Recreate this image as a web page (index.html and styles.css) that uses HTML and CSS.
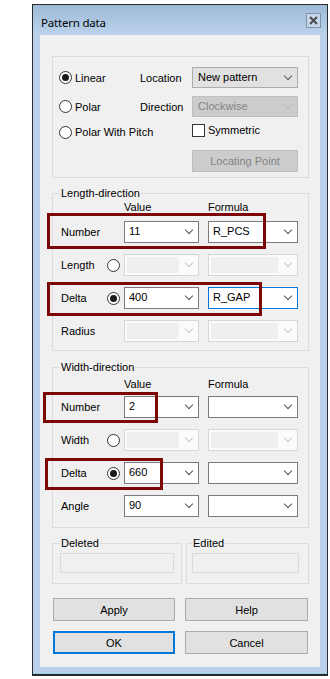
FILE: index.html
```html
<!DOCTYPE html>
<html lang="en">
<head>
    <meta charset="UTF-8">
    <meta name="viewport" content="width=device-width, initial-scale=1.0">
    <title>Pattern data</title>
    <link rel="stylesheet" href="styles.css">
</head>
<body>
    <div class="window">
        <div class="titlebar">
            <span class="title">Pattern data</span>
            <span class="close">
                <svg width="9" height="9" viewBox="0 0 9 9"><path d="M1 1 L8 8 M8 1 L1 8" stroke="#4d4d4d" stroke-width="2"/></svg>
            </span>
        </div>
        <div class="client">
            <div class="group top-group">
                <div class="opt"><span class="radio checked"></span>Linear</div>
                <div class="lbl">Location</div>
                <div class="combo btn-combo">New pattern</div>

                <div class="opt"><span class="radio"></span>Polar</div>
                <div class="lbl">Direction</div>
                <div class="combo btn-combo off">Clockwise</div>

                <div class="opt short"><span class="radio"></span>Polar With Pitch</div>
                <div></div>
                <div class="check"><span class="box"></span>Symmetric</div>

                <div></div>
                <div></div>
                <div class="button off">Locating Point</div>
            </div>

            <fieldset class="fs length">
                <legend>Length-direction</legend>
                <div class="grid">
                    <div></div><div></div>
                    <div class="head">Value</div>
                    <div class="head formula">Formula</div>

                    <div class="lbl">Number</div><div></div>
                    <div class="combo">11</div>
                    <div class="combo formula">R_PCS</div>

                    <div class="lbl">Length</div>
                    <div class="rcell"><span class="radio"></span></div>
                    <div class="combo dim"></div>
                    <div class="combo dim formula"></div>

                    <div class="lbl">Delta</div>
                    <div class="rcell"><span class="radio checked"></span></div>
                    <div class="combo">400</div>
                    <div class="combo formula focus">R_GAP</div>

                    <div class="lbl">Radius</div><div></div>
                    <div class="combo dim"></div>
                    <div class="combo dim formula"></div>
                </div>
            </fieldset>

            <fieldset class="fs width">
                <legend>Width-direction</legend>
                <div class="grid">
                    <div></div><div></div>
                    <div class="head">Value</div>
                    <div class="head formula">Formula</div>

                    <div class="lbl">Number</div><div></div>
                    <div class="combo">2</div>
                    <div class="combo formula"></div>

                    <div class="lbl">Width</div>
                    <div class="rcell"><span class="radio"></span></div>
                    <div class="combo dim"></div>
                    <div class="combo dim formula"></div>

                    <div class="lbl">Delta</div>
                    <div class="rcell"><span class="radio checked"></span></div>
                    <div class="combo">660</div>
                    <div class="combo formula"></div>

                    <div class="lbl">Angle</div><div></div>
                    <div class="combo">90</div>
                    <div class="combo formula"></div>
                </div>
            </fieldset>

            <div class="pair">
                <fieldset class="fs small deleted">
                    <legend>Deleted</legend>
                    <div class="textbox"></div>
                </fieldset>
                <fieldset class="fs small edited">
                    <legend>Edited</legend>
                    <div class="textbox"></div>
                </fieldset>
            </div>

            <div class="buttons">
                <div class="button">Apply</div>
                <div class="button">Help</div>
                <div class="button default">OK</div>
                <div class="button">Cancel</div>
            </div>

            <!-- highlight marks drawn over the dialog -->
            <div class="mark mark-1"></div>
            <div class="mark mark-2"></div>
            <div class="mark mark-3"></div>
            <div class="mark mark-4"></div>
        </div>
    </div>
</body>
</html>
```

FILE: styles.css
```css
body {
    margin: 0;
    background: #fff;
    font-family: "Liberation Sans", Arial, sans-serif;
    font-size: 11px;
    color: #000;
}
.window {
    margin: 4px 0 0 32px;
    width: 296px;
    box-sizing: border-box;
    border: 1px solid #2b2b2b;
    border-bottom: 2px solid #2b2b2b;
    background: #b9d1ea;
    padding: 0 7px 7px;
    box-shadow: inset 0 -1px 0 #8fd3f0;
}
.titlebar {
    height: 30px;
    margin: 0 -7px;
    padding: 0 6px 0 8px;
    background: linear-gradient(#9dbad8, #bbd2ea);
    display: flex;
    align-items: center;
    justify-content: space-between;
}
.title {
    font-family: "Noto Sans", sans-serif;
    font-size: 11.5px;
    letter-spacing: -0.2px;
    line-height: 14px;
    margin-top: 6px;
}
.close {
    width: 13px;
    height: 13px;
    border: 1px solid #8394a8;
    background: #c5d7ea;
    display: flex;
    align-items: center;
    justify-content: center;
}
.client {
    position: relative;
    height: 632px;
    box-sizing: border-box;
    background: #f0f0f0;
    padding: 21px 11px 0 12px;
}

/* group boxes */
.group {
    border: 1px solid #dcdcdc;
}
.top-group {
    display: grid;
    grid-template-columns: 81px 52px 106px;
    grid-template-rows: 29px 29px 25px 22px;
    padding: 10px 0 5px 6px;
    align-items: start;
}
.fs {
    margin: 0;
    border: 1px solid #dcdcdc;
    min-width: 0;
}
.fs legend {
    padding: 0 1px;
    line-height: 13px;
}
.length {
    margin-top: 9px;
    padding: 1px 10px 8px 7px;
}
.width {
    margin-top: 10px;
    padding: 4px 10px 10px 7px;
}
.grid {
    display: grid;
    grid-template-columns: 47px 17px 75px 99px;
    align-items: start;
}
.length .grid { grid-template-rows: 20px 33px 33px 33px 22px; }
.width .grid { grid-template-rows: 18px 33px 33px 33px 22px; }
.head {
    line-height: 13px;
}
.formula {
    margin-left: 9px;
}

.lbl {
    height: 22px;
    display: flex;
    align-items: center;
    padding-left: 1px;
}
.top-group .lbl { height: 21px; padding-left: 0; }
.opt {
    height: 21px;
    display: flex;
    align-items: center;
    gap: 3px;
    white-space: nowrap;
}
.opt.short { height: 14px; }
.rcell {
    height: 22px;
    display: flex;
    align-items: center;
}

/* radio and check */
.radio {
    width: 11px;
    height: 11px;
    border: 1px solid #333;
    border-radius: 50%;
    background: #fff;
    display: flex;
    align-items: center;
    justify-content: center;
    flex: none;
}
.radio.checked::after {
    content: "";
    width: 7px;
    height: 7px;
    border-radius: 50%;
    background: #1b1b1b;
}
.check {
    height: 14px;
    margin-top: -2px;
    display: flex;
    align-items: center;
    gap: 3px;
}
.box {
    width: 11px;
    height: 11px;
    border: 1px solid #333;
    background: #fff;
}

/* combos */
.combo {
    position: relative;
    height: 22px;
    box-sizing: border-box;
    border: 1px solid #7a7a7a;
    background: #fff;
    padding-left: 4px;
    line-height: 19px;
}
.combo::after {
    content: "";
    position: absolute;
    right: 6px;
    top: 5px;
    width: 5px;
    height: 5px;
    border-right: 1px solid #555;
    border-bottom: 1px solid #555;
    transform: rotate(45deg);
}
.combo.focus {
    border-color: #0078d7;
}
.combo.dim {
    border-color: #d6d6d6;
    background: #fbfbfb;
}
.combo.dim::before {
    content: "";
    position: absolute;
    left: 2px;
    top: 2px;
    bottom: 2px;
    right: 19px;
    background: #efefef;
}
.combo.dim::after {
    border-color: #c8c8c8;
}
.btn-combo {
    height: 21px;
    background: #e1e1e1;
    border-color: #adadad;
    padding-left: 5px;
    line-height: 19px;
}
.btn-combo.off {
    background: #cccccc;
    border-color: #bfbfbf;
    color: #838383;
}
.btn-combo.off::after {
    border-color: #bfbfbf;
}

/* buttons */
.button {
    height: 23px;
    box-sizing: border-box;
    border: 1px solid #adadad;
    background: #e1e1e1;
    display: flex;
    align-items: center;
    justify-content: center;
}
.button.off {
    height: 22px;
    background: #cccccc;
    border-color: #bfbfbf;
    color: #838383;
}
.button.default {
    border: 2px solid #0078d7;
}

/* deleted / edited */
.pair {
    display: flex;
    gap: 4px;
    margin-top: 9px;
}
.small {
    padding: 3px 0 10px;
}
.deleted { width: 130px; box-sizing: border-box; padding-left: 7px; }
.edited { width: 123px; box-sizing: border-box; padding-left: 5px; }
.textbox {
    height: 20px;
    box-sizing: border-box;
    border: 1px solid #dadada;
    background: #f0f0f0;
}
.deleted .textbox { width: 114px; }
.edited .textbox { width: 107px; }

.buttons {
    display: grid;
    grid-template-columns: 122px 123px;
    column-gap: 10px;
    row-gap: 10px;
    margin: 14px 0 0 1px;
}

/* red highlight marks */
.mark {
    position: absolute;
    box-sizing: border-box;
    border: 3px solid #7d0606;
}
.mark-1 { left: 7px; top: 178px; width: 219px; height: 36px; }
.mark-2 { left: 7px; top: 247px; width: 215px; height: 34px; }
.mark-3 { left: 3px; top: 357px; width: 115px; height: 31px; }
.mark-4 { left: 5px; top: 423px; width: 118px; height: 32px; }
```
